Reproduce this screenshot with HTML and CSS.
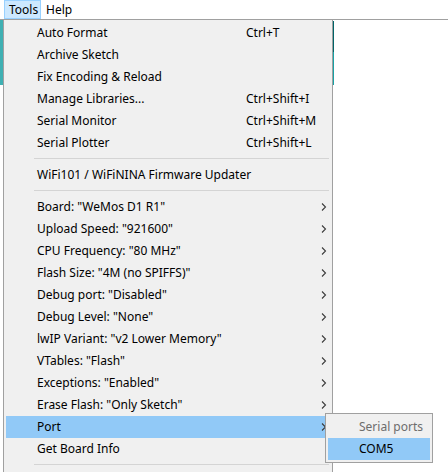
FILE: index.html
```html
<!DOCTYPE html>
<html>
<head>
<meta charset="utf-8">
<link rel="stylesheet" href="styles.css">
</head>
<body>
<div class="menubar">
  <div class="mb-item active">Tools</div>
  <div class="mb-item">Help</div>
</div>
<div class="window">
  <div class="toolbar"><div class="tb-top"></div><div class="tb-tabs"></div></div>
  <div class="editor"></div>
</div>

<div class="menu">
  <div class="item"><span class="label">Auto Format</span><span class="sc">Ctrl+T</span><span class="arr"></span></div>
  <div class="item"><span class="label">Archive Sketch</span><span class="sc"></span><span class="arr"></span></div>
  <div class="item"><span class="label">Fix Encoding &amp; Reload</span><span class="sc"></span><span class="arr"></span></div>
  <div class="item"><span class="label">Manage Libraries...</span><span class="sc">Ctrl+Shift+I</span><span class="arr"></span></div>
  <div class="item"><span class="label">Serial Monitor</span><span class="sc">Ctrl+Shift+M</span><span class="arr"></span></div>
  <div class="item"><span class="label">Serial Plotter</span><span class="sc">Ctrl+Shift+L</span><span class="arr"></span></div>
  <div class="sep"></div>
  <div class="item"><span class="label">WiFi101 / WiFiNINA Firmware Updater</span><span class="sc"></span><span class="arr"></span></div>
  <div class="sep"></div>
  <div class="item"><span class="label">Board: "WeMos D1 R1"</span><span class="sc"></span><span class="arr"><svg width="6" height="8" viewBox="0 0 6 8"><path d="M1 0.5 L4.5 4 L1 7.5" fill="none" stroke="#3c3c3c" stroke-width="1.1"/></svg></span></div>
  <div class="item"><span class="label">Upload Speed: "921600"</span><span class="sc"></span><span class="arr"><svg width="6" height="8" viewBox="0 0 6 8"><path d="M1 0.5 L4.5 4 L1 7.5" fill="none" stroke="#3c3c3c" stroke-width="1.1"/></svg></span></div>
  <div class="item"><span class="label">CPU Frequency: "80 MHz"</span><span class="sc"></span><span class="arr"><svg width="6" height="8" viewBox="0 0 6 8"><path d="M1 0.5 L4.5 4 L1 7.5" fill="none" stroke="#3c3c3c" stroke-width="1.1"/></svg></span></div>
  <div class="item"><span class="label">Flash Size: "4M (no SPIFFS)"</span><span class="sc"></span><span class="arr"><svg width="6" height="8" viewBox="0 0 6 8"><path d="M1 0.5 L4.5 4 L1 7.5" fill="none" stroke="#3c3c3c" stroke-width="1.1"/></svg></span></div>
  <div class="item"><span class="label">Debug port: "Disabled"</span><span class="sc"></span><span class="arr"><svg width="6" height="8" viewBox="0 0 6 8"><path d="M1 0.5 L4.5 4 L1 7.5" fill="none" stroke="#3c3c3c" stroke-width="1.1"/></svg></span></div>
  <div class="item"><span class="label">Debug Level: "None"</span><span class="sc"></span><span class="arr"><svg width="6" height="8" viewBox="0 0 6 8"><path d="M1 0.5 L4.5 4 L1 7.5" fill="none" stroke="#3c3c3c" stroke-width="1.1"/></svg></span></div>
  <div class="item"><span class="label">lwIP Variant: "v2 Lower Memory"</span><span class="sc"></span><span class="arr"><svg width="6" height="8" viewBox="0 0 6 8"><path d="M1 0.5 L4.5 4 L1 7.5" fill="none" stroke="#3c3c3c" stroke-width="1.1"/></svg></span></div>
  <div class="item"><span class="label">VTables: "Flash"</span><span class="sc"></span><span class="arr"><svg width="6" height="8" viewBox="0 0 6 8"><path d="M1 0.5 L4.5 4 L1 7.5" fill="none" stroke="#3c3c3c" stroke-width="1.1"/></svg></span></div>
  <div class="item"><span class="label">Exceptions: "Enabled"</span><span class="sc"></span><span class="arr"><svg width="6" height="8" viewBox="0 0 6 8"><path d="M1 0.5 L4.5 4 L1 7.5" fill="none" stroke="#3c3c3c" stroke-width="1.1"/></svg></span></div>
  <div class="item"><span class="label">Erase Flash: "Only Sketch"</span><span class="sc"></span><span class="arr"><svg width="6" height="8" viewBox="0 0 6 8"><path d="M1 0.5 L4.5 4 L1 7.5" fill="none" stroke="#3c3c3c" stroke-width="1.1"/></svg></span></div>
  <div class="item hl"><span class="label">Port</span><span class="sc"></span><span class="arr"><svg width="6" height="8" viewBox="0 0 6 8"><path d="M1 0.5 L4.5 4 L1 7.5" fill="none" stroke="#3c3c3c" stroke-width="1.1"/></svg></span></div>
  <div class="item"><span class="label">Get Board Info</span><span class="sc"></span><span class="arr"></span></div>
  <div class="sep"></div>
</div>

<div class="submenu">
  <div class="sitem disabled">Serial ports</div>
  <div class="sitem hl">COM5</div>
</div>
</body>
</html>
```
FILE: styles.css
```css
* { box-sizing: border-box; }
html, body {
  margin: 0;
  padding: 0;
  background: #ffffff;
  width: 448px;
  height: 472px;
  overflow: hidden;
  font-family: "Noto Sans", "Open Sans", sans-serif;
  font-size: 12px;
  color: #000;
}
.menubar {
  height: 20px;
  display: flex;
  align-items: flex-start;
  border-bottom: 1px solid #a0a0a0;
  padding-left: 4px;
  gap: 0;
}
.mb-item {
  height: 19px;
  line-height: 17px;
  padding: 0 4px 0 4px;
  border: 1px solid transparent;
}
.mb-item.active {
  background: #cce8ff;
  border-color: #99d1ff;
  width: 37px;
}
.window {
  width: 334px;
}
.toolbar {
  height: 65px;
  display: flex;
  flex-direction: column;
  border-left: 3px solid #3fb0b3;
}
.tb-top {
  height: 32px;
  background: #006468;
  border-top: 1px solid #ffffff;
}
.tb-tabs {
  flex: 1;
  background: #17a1a5;
}
.menu {
  position: absolute;
  left: 3px;
  top: 19px;
  width: 330px;
  height: 470px;
  background: #f0f0f0;
  border: 1px solid #a0a0a0;
  padding: 2px 2px;
}
.item {
  height: 22px;
  line-height: 22px;
  display: grid;
  grid-template-columns: 209px 1fr 10px;
  padding-left: 31px;
  white-space: nowrap;
}
.item.hl { background: #91c9f7; }
.arr {
  display: flex;
  align-items: center;
  padding-left: 1px;
}
.arr svg { display: block; }
.sep {
  height: 10px;
  padding-top: 4px;
  margin-left: 28px;
  margin-right: 1px;
}
.sep::before {
  content: "";
  display: block;
  height: 1px;
  background: #d4d4d4;
}
.submenu {
  position: absolute;
  left: 325px;
  top: 413px;
  width: 108px;
  height: 50px;
  background: #f0f0f0;
  border: 1px solid #a0a0a0;
  padding: 2px;
}
.sitem {
  height: 22px;
  line-height: 22px;
  padding-left: 31px;
}
.sitem.disabled { color: #6d6d6d; }
.sitem.hl { background: #91c9f7; }
```
